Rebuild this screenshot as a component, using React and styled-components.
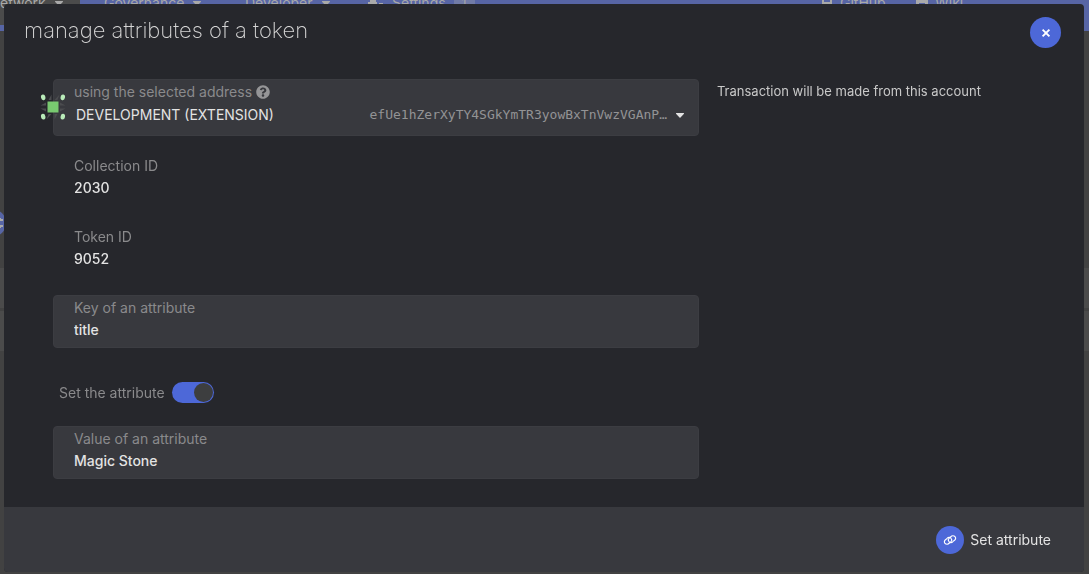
import React, { useState } from 'react';
import styled, { createGlobalStyle } from 'styled-components';

const GlobalStyle = createGlobalStyle`
  * {
    box-sizing: border-box;
  }

  body {
    margin: 0;
    background: #424242;
    color: #e3e3e3;
    font-family: Inter, 'Liberation Sans', sans-serif;
    font-size: 14px;
    line-height: 20px;
    overflow: hidden;
  }

  button,
  input,
  select {
    font: inherit;
    color: inherit;
  }
`;

const Page = styled.div`
  min-height: 100vh;
  overflow: hidden;
`;

const NavBar = styled.nav`
  display: flex;
  height: 31px;
  overflow: hidden;
  background: #5765a5;
  color: #a9a9a9;
`;

const NavItem = styled.a`
  display: flex;
  flex: none;
  align-items: center;
  gap: ${({ $gap }) => $gap || 9}px;
  height: 44px;
  margin-top: -19px;
  width: ${({ $width }) => $width}px;
  padding-left: ${({ $indent }) => $indent || 0}px;
  background: ${({ $active }) => ($active ? '#4b4b4b' : 'transparent')};
  color: inherit;
  text-decoration: none;
`;

const NavSpacer = styled.div`
  flex: 1;
`;

const NavBadge = styled.span`
  padding: 0 8px;
  border-radius: 3px;
  background: #717ba7;
  font-size: 12px;
`;

const PageBody = styled.div`
  display: flex;
  flex-direction: column;
  align-items: flex-start;
  padding-top: 178px;
`;

const PageButton = styled.button`
  display: flex;
  align-items: center;
  justify-content: flex-end;
  width: 28px;
  height: 28px;
  margin-left: -22px;
  margin-bottom: 31px;
  padding: 0 2px;
  border: 0;
  border-radius: 50%;
  background: #5765a5;
  color: #a9a9a9;
`;

const PageRow = styled.div`
  width: 100%;
  height: 40px;
  margin-bottom: 3px;
  background: #4b4b4b;
`;

const Overlay = styled.div`
  position: fixed;
  inset: 0;
  padding: 4px 5px 3px 4px;
`;

const Modal = styled.section`
  display: flex;
  flex-direction: column;
  min-height: 100%;
  border-radius: 4px;
  background: #26272c;
  overflow: hidden;
`;

const ModalHeader = styled.header`
  display: flex;
  align-items: flex-start;
  justify-content: space-between;
  padding: 13px 23px 0 20px;
`;

const Title = styled.h1`
  margin: 0;
  color: #d6d6d6;
  font-size: 22px;
  font-weight: 200;
  line-height: 26px;
`;

const CloseButton = styled.button`
  display: grid;
  place-items: center;
  width: 31px;
  height: 31px;
  padding: 0;
  border: 0;
  border-radius: 50%;
  background: #4d68d8;
`;

const ModalBody = styled.div`
  display: grid;
  grid-template-columns: 23fr 12fr;
  gap: 18px;
  flex: 1;
  padding: 31px 30px 28px 49px;
`;

const Form = styled.form`
  display: flex;
  flex-direction: column;
`;

const Hint = styled.p`
  margin: 2px 0;
  color: #c9c9c9;
  font-size: 13px;
`;

const FieldBox = styled.div`
  position: relative;
  display: flex;
  flex-direction: column;
  height: ${({ $height }) => $height}px;
  padding: 2px 14px 0 20px;
  border: 1px solid ${({ $plain }) => ($plain ? 'transparent' : '#3c3d42')};
  border-radius: 4px;
  background: ${({ $plain }) => ($plain ? 'transparent' : '#38393e')};
  margin-bottom: ${({ $space }) => $space || 0}px;
`;

const Label = styled.label`
  display: flex;
  align-items: center;
  gap: 4px;
  color: #8a8a8c;
`;

const TextInput = styled.input`
  width: 100%;
  height: 22px;
  padding: 0;
  border: 0;
  outline: 0;
  background: transparent;
  font-weight: 500;
`;

const Value = styled.output`
  line-height: 24px;
  font-weight: 500;
`;

const Identicon = styled.svg`
  position: absolute;
  left: -15px;
  top: 13px;
`;

const AccountPicker = styled.div`
  display: grid;
  grid-template-columns: 1fr auto auto;
  align-items: center;
  column-gap: 9px;
`;

const AccountSelect = styled.select`
  grid-row: 1;
  grid-column: 1 / -1;
  height: 26px;
  padding: 0 0 0 2px;
  border: 0;
  outline: 0;
  appearance: none;
  background: transparent;
`;

const Address = styled.span`
  grid-row: 1;
  grid-column: 2;
  color: #939395;
  font-family: 'DejaVu Sans Mono', monospace;
  font-size: 13px;
  pointer-events: none;
`;

const Caret = styled.svg`
  grid-row: 1;
  grid-column: 3;
  pointer-events: none;
`;

const ToggleRow = styled.label`
  display: flex;
  align-items: center;
  gap: 7px;
  margin-bottom: 23px;
  padding-left: 6px;
  color: #8a8a8c;
`;

const Toggle = styled.input`
  appearance: none;
  display: flex;
  width: 42px;
  height: 21px;
  margin: 0;
  padding: 1px;
  border-radius: 11px;
  background: #4d4e53;

  &::before {
    content: '';
    width: 19px;
    height: 19px;
    border-radius: 50%;
    background: #3d3e3f;
  }

  &:checked {
    justify-content: flex-end;
    background: #4d68d8;
  }
`;

const ModalFooter = styled.footer`
  display: flex;
  align-items: center;
  justify-content: flex-end;
  height: 65px;
  padding-right: 33px;
  background: #38393e;
`;

const SubmitButton = styled.button`
  display: flex;
  align-items: center;
  gap: 6px;
  padding: 0;
  border: 0;
  background: transparent;
`;

const IconCircle = styled.span`
  display: grid;
  place-items: center;
  width: 28px;
  height: 28px;
  border-radius: 50%;
  background: #4d68d8;
`;

const CaretDown = () => (
  <Caret width="8" height="5" viewBox="0 0 8 5" aria-hidden="true">
    <path d="M0.6 0h6.8a.5.5 0 0 1 .4.9L4.5 4.5a.7.7 0 0 1-1 0L.2.9A.5.5 0 0 1 .6 0z" fill="currentColor" />
  </Caret>
);

const CloseIcon = () => (
  <svg width="10" height="10" viewBox="0 0 10 10" aria-hidden="true">
    <path d="M1.6 1.6l6.8 6.8M8.4 1.6L1.6 8.4" stroke="#fff" strokeWidth="1.9" />
  </svg>
);

const HelpIcon = () => (
  <svg width="14" height="14" viewBox="0 0 512 512" aria-hidden="true">
    <path
      fill="#959597"
      d="M504 256c0 136.997-111.043 248-248 248S8 392.997 8 256C8 119.083 119.043 8 256 8s248 111.083 248 248zM262.655 90c-54.497 0-89.255 22.957-116.549 63.758-3.536 5.286-2.353 12.415 2.715 16.258l34.699 26.31c5.205 3.947 12.621 3.008 16.665-2.122 17.864-22.658 30.113-35.797 57.303-35.797 20.429 0 45.698 13.148 45.698 32.958 0 14.976-12.363 22.667-32.534 33.976C247.128 238.528 216 254.941 216 296v4c0 6.627 5.373 12 12 12h56c6.627 0 12-5.373 12-12v-1.333c0-28.462 83.186-29.647 83.186-106.667 0-58.002-60.165-102-116.531-102zM256 338c-25.365 0-46 20.635-46 46 0 25.364 20.635 46 46 46s46-20.636 46-46c0-25.365-20.635-46-46-46z"
    />
  </svg>
);

const LinkIcon = () => (
  <svg width="14" height="14" viewBox="0 0 14 14" fill="none" stroke="#fff" strokeWidth="1.2" aria-hidden="true">
    <path d="M8.300 5.600a2.300 2.300 0 0 1-.3 3L6.200 10.200a2.700 2.700 0 0 1-4.200.1 2.300 2.300 0 0 1 .2-3.300l2-1.600" />
    <path d="M5.700 8.400a2.300 2.300 0 0 1 .3-3L7.800 3.800a2.700 2.700 0 0 1 4.200-.1 2.300 2.300 0 0 1-.2 3.300l-2 1.600" />
    <path d="M4.200 5.400a2.500 2.500 0 0 1 4.100.2M9.800 8.600a2.500 2.500 0 0 1-4.100-.2" />
  </svg>
);

const AccountIcon = () => (
  <Identicon width="28" height="28" viewBox="0 0 28 28" aria-hidden="true">
    <g fill="#4b4c4f">
      <path d="M12.500 7V1.500L9.500 7zM15.500 7h3l2-5.500zM21 12.500V9.500l5.500 3zM21 15.500h5.500l-5.500 3zM15.500 21v5.500l3-5.500zM12.500 21h-3l-2 5.500zM7 15.500v3l-5.500-3zM7 12.500H1.500L7 9.500z" />
    </g>
    <g fill="#b9ebb9">
      <ellipse cx="4.200" cy="4.300" rx="2.200" ry="2.900" transform="rotate(-12 4.200 4.300)" />
      <ellipse cx="23.800" cy="4.300" rx="2.200" ry="2.900" transform="rotate(12 23.800 4.300)" />
      <ellipse cx="4.200" cy="23.700" rx="2.200" ry="2.900" transform="rotate(-12 4.200 23.700)" />
      <ellipse cx="23.800" cy="23.700" rx="2.200" ry="2.900" transform="rotate(12 23.800 23.700)" />
    </g>
    <path d="M8.500 8.500h11v11h-11z" fill="#78c970" />
  </Identicon>
);

const Navigation = () => (
  <NavBar>
    <NavItem href="#network" $active $width={80}>etwork <CaretDown /></NavItem>
    <NavItem href="#governance" $width={140} $indent={24}>Governance <CaretDown /></NavItem>
    <NavItem href="#developer" $width={148} $indent={25}>Developer <CaretDown /></NavItem>
    <NavItem href="#settings" $width={130} $gap={8}>
      <svg width="16" height="14" viewBox="0 0 16 14" fill="currentColor" aria-hidden="true">
        <path d="M2 3h2V1h2v2h2v8H2zM0 6h9v3H0zM11 7h4v5h-4zM10 8h6v2h-6z" />
      </svg>
      Settings
      <NavBadge>1</NavBadge>
    </NavItem>
    <NavSpacer />
    <NavItem href="#github" $width={95} $gap={7}>
      <svg width="12" height="14" viewBox="0 0 12 14" fill="none" stroke="currentColor" strokeWidth="2" aria-hidden="true">
        <path d="M2 1v12M10 3v4H2" />
      </svg>
      GitHub
    </NavItem>
    <NavItem href="#wiki" $width={173} $gap={7}>
      <svg width="12" height="14" viewBox="0 0 12 14" fill="currentColor" aria-hidden="true">
        <path d="M0 0h12v14H0zM3 7v1h6V7z" fillRule="evenodd" />
      </svg>
      Wiki
    </NavItem>
  </NavBar>
);

const TextField = ({ id, label, value, onChange, space }) => (
  <FieldBox $height={53} $space={space}>
    <Label htmlFor={id}>{label}</Label>
    <TextInput id={id} value={value} onChange={(e) => onChange(e.target.value)} />
  </FieldBox>
);

const StaticField = ({ id, label, value, space }) => (
  <FieldBox $plain $height={54} $space={space}>
    <Label htmlFor={id}>{label}</Label>
    <Value id={id}>{value}</Value>
  </FieldBox>
);

const App = () => {
  const [key, setKey] = useState('title');
  const [value, setValue] = useState('Magic Stone');
  const [isSet, setIsSet] = useState(true);

  return (
    <>
      <GlobalStyle />
      <Page>
        <Navigation />
        <PageBody>
          <PageButton aria-label="Create">
            <svg width="8" height="10" viewBox="0 0 8 10" fill="none" stroke="currentColor" strokeWidth="2" aria-hidden="true">
              <path d="M4 0v3M4 7v3M0 2h7M0 8h7" />
            </svg>
          </PageButton>
          <PageRow />
          <PageRow />
        </PageBody>
      </Page>
      <Overlay>
        <Modal role="dialog" aria-labelledby="modal-title">
          <ModalHeader>
            <Title id="modal-title">manage attributes of a token</Title>
            <CloseButton type="button" aria-label="Close">
              <CloseIcon />
            </CloseButton>
          </ModalHeader>
          <ModalBody>
            <Form id="attribute-form" onSubmit={(e) => e.preventDefault()}>
              <FieldBox $height={57} $space={17}>
                <AccountIcon />
                <Label htmlFor="account">
                  using the selected address
                  <HelpIcon />
                </Label>
                <AccountPicker>
                  <AccountSelect id="account">
                    <option>DEVELOPMENT (EXTENSION)</option>
                  </AccountSelect>
                  <Address>efUe1hZerXyTY4SGkYmTR3yowBxTnVwzVGAnP…</Address>
                  <CaretDown />
                </AccountPicker>
              </FieldBox>
              <StaticField id="collection" label="Collection ID" value="2030" space={17} />
              <StaticField id="token" label="Token ID" value="9052" space={17} />
              <TextField id="key" label="Key of an attribute" value={key} onChange={setKey} space={34} />
              <ToggleRow>
                Set the attribute
                <Toggle type="checkbox" checked={isSet} onChange={(e) => setIsSet(e.target.checked)} />
              </ToggleRow>
              <TextField id="value" label="Value of an attribute" value={value} onChange={setValue} />
            </Form>
            <Hint>Transaction will be made from this account</Hint>
          </ModalBody>
          <ModalFooter>
            <SubmitButton type="submit" form="attribute-form">
              <IconCircle>
                <LinkIcon />
              </IconCircle>
              Set attribute
            </SubmitButton>
          </ModalFooter>
        </Modal>
      </Overlay>
    </>
  );
};

export default App;
